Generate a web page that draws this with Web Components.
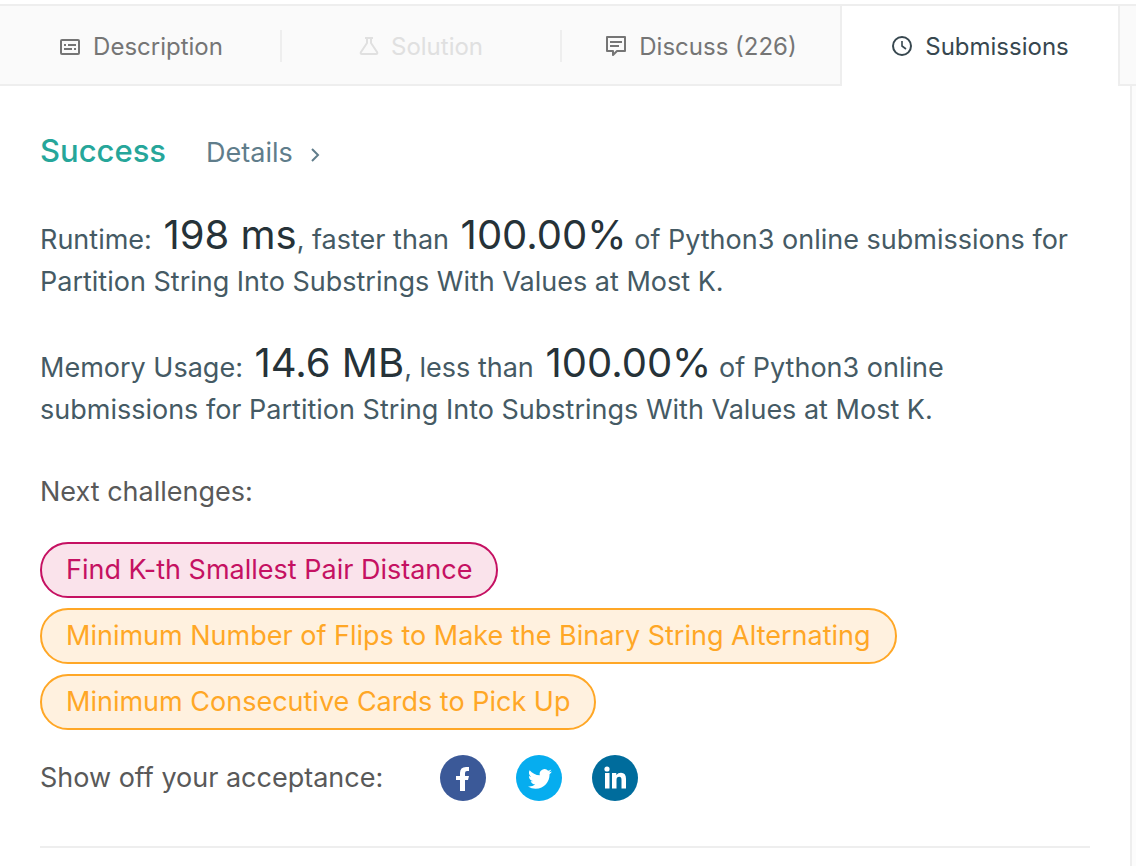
<!DOCTYPE html>
<html lang="en">
<head>
<meta charset="utf-8">
<title>Submissions</title>
<style>
  body { margin: 0; background: #fff; font-family: Inter, "Open Sans", sans-serif; }
</style>
</head>
<body>
<submission-page></submission-page>

<template id="tab-link">
  <style>
    :host { display: flex; box-sizing: border-box; height: 80px; padding-top: 2px; align-items: center; background: #fafafa; border-bottom: 2px solid #eee; color: #757575; }
    :host::before { content: ""; width: 2px; height: 32px; background: #eee; }
    :host(:first-child)::before { background: none; }
    :host([disabled]) { color: #e0e0e0; }
    :host([active]) { background: #fff; color: #37474f; border: 0 solid #eee; border-width: 0 2px; padding-top: 0; }
    :host([active])::before { display: none; }
    a { flex: 1; display: flex; justify-content: center; align-items: center; gap: 12px; padding-top: 2px; color: inherit; text-decoration: none; font-size: 24px; line-height: 32px; white-space: nowrap; }
  </style>
  <a href="#"><slot name="icon"></slot><slot></slot></a>
</template>

<template id="result-line">
  <style>
    :host { display: block; font-size: 27px; line-height: 42px; color: #455a64; }
    p { margin: 0; }
    ::slotted(b) { margin-left: 4px; font-weight: 400; font-size: 40px; line-height: 1px; color: #263238; }
  </style>
  <p><slot></slot></p>
</template>

<template id="challenge-pill">
  <style>
    :host { display: block; color: #ffa726; --fill: #fff1df; }
    :host([level="hard"]) { color: #c51162; --fill: #fae3eb; }
    a { display: inline-block; box-sizing: border-box; height: 56px; padding: 0 24px; border: 2px solid; border-radius: 28px; background: var(--fill); color: inherit; text-decoration: none; font-size: 27px; line-height: 52px; white-space: nowrap; }
  </style>
  <a href="#"><slot></slot></a>
</template>

<template id="share-button">
  <style>
    :host { display: block; }
    button { display: flex; align-items: center; justify-content: center; width: 46px; height: 46px; padding: 0; border: 0; border-radius: 50%; background: var(--brand); color: #fff; }
  </style>
  <button type="button"><slot></slot></button>
</template>

<template id="submission-page">
  <style>
    :host { display: flex; flex-direction: column; min-height: 100vh; box-sizing: border-box; padding-top: 4px; }
    nav { display: grid; grid-template-columns: repeat(4, 1fr) 16px; border-top: 2px solid #eee; }
    .rest { background: #fafafa; border-bottom: 2px solid #eee; }
    .body { flex: 1; display: flex; background: #fcfcfc; padding-right: 4px; }
    main { flex: 1; background: #fff; border-right: 2px solid #eee; padding: 44px 40px 0; }
    .status { display: flex; align-items: baseline; gap: 40px; line-height: 42px; margin-bottom: 45px; }
    h1 { margin: 0; font-size: 31px; font-weight: 500; color: #26a69a; }
    .details { display: flex; align-items: center; gap: 18px; font-size: 27px; color: #607d8b; text-decoration: none; }
    .details svg { margin-top: 4px; }
    .results { display: flex; flex-direction: column; gap: 44px; margin-bottom: 40px; }
    h2, .label { margin: 0; font-size: 27px; font-weight: 400; line-height: 42px; color: #595959; }
    .list { display: flex; flex-direction: column; gap: 10px; margin: 29px 0 25px; }
    .share { display: flex; align-items: center; gap: 30px; padding-bottom: 45px; border-bottom: 2px solid #eee; }
    .label { margin-right: 27px; }
    svg { display: block; }
  </style>
  <nav>
    <tab-link>
      <svg slot="icon" width="22" height="18" viewBox="0 0 22 18" fill="none" stroke="currentColor" stroke-width="2"><rect x="2" y="2" width="18" height="14" rx="1"/><path d="M5 7h2M9 7h8M5 11h8M15 11h2"/></svg>
      Description
    </tab-link>
    <tab-link disabled>
      <svg slot="icon" width="20" height="22" viewBox="0 0 20 22" fill="none" stroke="currentColor" stroke-width="2" stroke-linejoin="round"><path d="M6 2h8M8 2v5L2 16q-1 2 1 2h14q2 0 1-2L12 7V2"/></svg>
      Solution
    </tab-link>
    <tab-link>
      <svg slot="icon" width="22" height="22" viewBox="0 0 22 22" fill="none" stroke="currentColor" stroke-width="2" stroke-linejoin="round"><path d="M2 1h18v14h-8l-4 4v-4H2zM5 6h12M5 10h9"/></svg>
      Discuss (226)
    </tab-link>
    <tab-link active>
      <svg slot="icon" width="22" height="22" viewBox="0 0 22 22" fill="none" stroke="currentColor" stroke-width="2"><circle cx="11" cy="10" r="9"/><path d="M11 5v5l4 3" stroke-width="1.6"/></svg>
      Submissions
    </tab-link>
    <div class="rest"></div>
  </nav>
  <div class="body">
    <main>
      <div class="status">
        <h1>Success</h1>
        <a class="details" href="#">Details
          <svg width="9" height="14" viewBox="0 0 9 14" fill="none" stroke="currentColor" stroke-width="2"><path d="M1 1l6 6-6 6"/></svg>
        </a>
      </div>
      <div class="results">
        <result-line>Runtime: <b>198 ms</b>, faster than <b>100.00%</b> of Python3 online submissions for Partition String Into Substrings With Values at Most K.</result-line>
        <result-line>Memory Usage: <b>14.6 MB</b>, less than <b>100.00%</b> of Python3 online submissions for Partition String Into Substrings With Values at Most K.</result-line>
      </div>
      <h2>Next challenges:</h2>
      <div class="list">
        <challenge-pill level="hard">Find K-th Smallest Pair Distance</challenge-pill>
        <challenge-pill>Minimum Number of Flips to Make the Binary String Alternating</challenge-pill>
        <challenge-pill>Minimum Consecutive Cards to Pick Up</challenge-pill>
      </div>
      <div class="share">
        <span class="label">Show off your acceptance:</span>
        <share-button label="Facebook" style="--brand:#3b5998"><svg width="46" height="46" viewBox="0 0 46 46" fill="currentColor"><path d="M20 36V25h-4v-4h4v-3q0-6 6-6h3v4h-2q-2 0-2 2v3h4l-1 4h-3v11z"/></svg></share-button>
        <share-button label="Twitter" style="--brand:#06adef"><svg width="46" height="46" viewBox="0 0 46 46" fill="currentColor"><g transform="translate(12 12)"><path d="M23.95 4.57a10 10 0 0 1-2.82.78 4.96 4.96 0 0 0 2.16-2.73c-.95.56-2 .96-3.13 1.19a4.92 4.92 0 0 0-8.39 4.48C7.69 8.09 4.07 6.13 1.64 3.16a4.82 4.82 0 0 0 1.52 6.57 4.9 4.9 0 0 1-2.23-.61v.06c0 2.39 1.71 4.38 3.95 4.83a5 5 0 0 1-2.21.08 4.94 4.94 0 0 0 4.6 3.42A9.87 9.87 0 0 1 0 19.54a14 14 0 0 0 7.55 2.21c9.05 0 14-7.5 14-13.98 0-.21 0-.42-.02-.63a9.94 9.94 0 0 0 2.42-2.57z"/></g></svg></share-button>
        <share-button label="LinkedIn" style="--brand:#006c9c"><svg width="46" height="46" viewBox="0 0 46 46" fill="currentColor"><circle cx="15" cy="14" r="2.6"/><path d="M13 18h4.500v15.500H13zM20 18h4.300v2q1.700-2.300 4.700-2.300 5 0 5 6v9.800h-4.500v-8.500q0-3.300-2.300-3.300-2.700 0-2.700 3.300v8.500H20z"/></svg></share-button>
      </div>
    </main>
  </div>
</template>

<script>
  class TemplateElement extends HTMLElement {
    constructor() {
      super();
      const template = document.getElementById(this.localName);
      this.attachShadow({ mode: "open" }).append(template.content.cloneNode(true));
    }
  }
  customElements.define("tab-link", class extends TemplateElement {
    connectedCallback() {
      const link = this.shadowRoot.querySelector("a");
      if (this.hasAttribute("active")) link.setAttribute("aria-current", "page");
      if (this.hasAttribute("disabled")) link.setAttribute("aria-disabled", "true");
    }
  });
  customElements.define("result-line", class extends TemplateElement {});
  customElements.define("challenge-pill", class extends TemplateElement {});
  customElements.define("share-button", class extends TemplateElement {
    connectedCallback() {
      this.shadowRoot.querySelector("button").setAttribute("aria-label", "Share on " + this.getAttribute("label"));
    }
  });
  customElements.define("submission-page", class extends TemplateElement {});
</script>
</body>
</html>
